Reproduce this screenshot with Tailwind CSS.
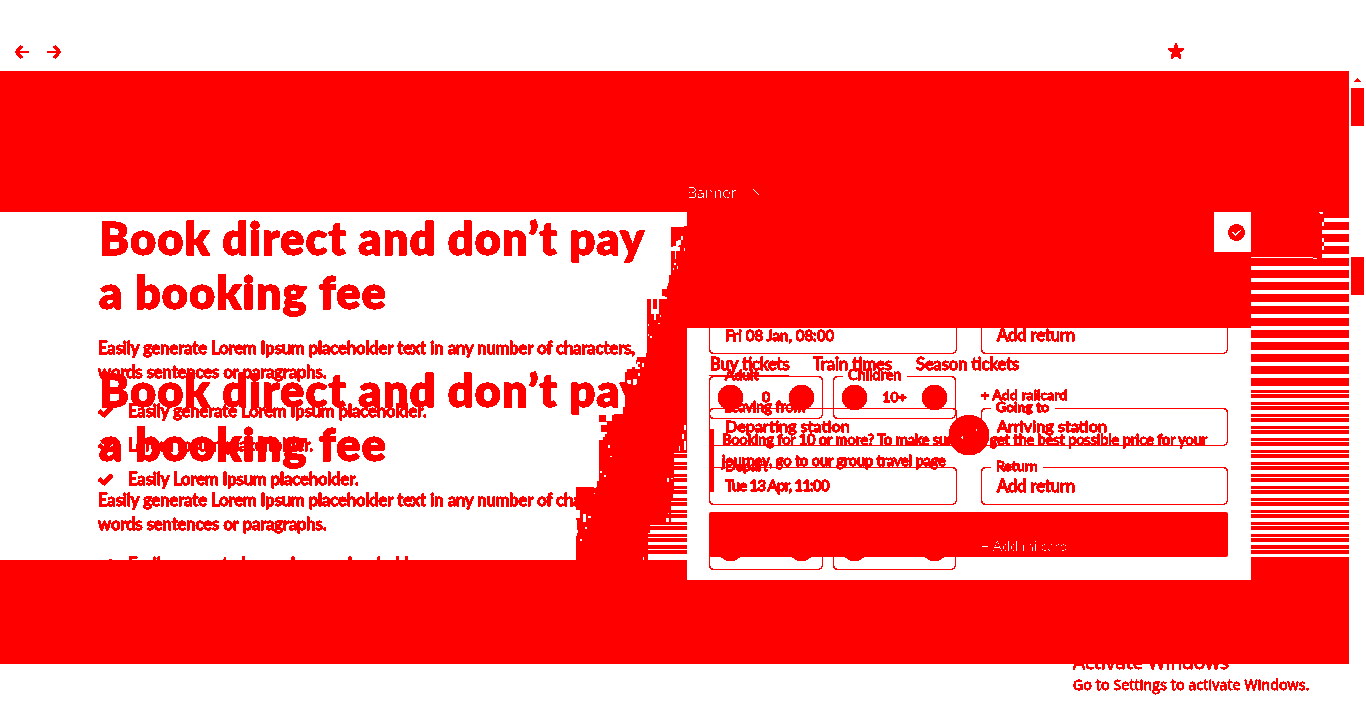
<!DOCTYPE html>
<html lang="en">
<head>
<meta charset="utf-8">
<title>Book direct</title>
<script src="https://cdn.jsdelivr.net/npm/@tailwindcss/browser@4"></script>
</head>
<body class="relative h-[728px] w-[1366px] overflow-hidden bg-white font-['Lato',sans-serif] text-[#ff0000]">
<svg class="absolute size-0">
  <filter id="solid" x="0" y="0" width="1" height="1"><feComponentTransfer><feFuncA type="discrete" tableValues="0 1 1 1 1 1 1 1"/></feComponentTransfer></filter>
  <filter id="core" x="0" y="0" width="1" height="1"><feComponentTransfer><feFuncA type="discrete" tableValues="0 0 0 0 0 0 0 0 0 0 0 0 0 0 1"/></feComponentTransfer></filter>
  <filter id="thin" x="0" y="0" width="1" height="1"><feComponentTransfer><feFuncA type="discrete" tableValues="0 0 0 0 1 1 1"/></feComponentTransfer></filter>
</svg>

<!-- toolbar -->
<header class="flex h-[71px] items-end pb-[12px] pl-[14px]">
  <svg class="h-[14px] w-[15px]" viewBox="0 0 15 14" fill="none" stroke="currentColor" shape-rendering="crispEdges"><path stroke-width="2" d="M15 7H3"/><path stroke-width="3.4" d="M8 1L2.5 7 8 13"/></svg>
  <svg class="ml-[18px] h-[14px] w-[15px]" viewBox="0 0 15 14" fill="none" stroke="currentColor" shape-rendering="crispEdges"><path stroke-width="2" d="M0 7h12"/><path stroke-width="3.4" d="M7 1l5.5 6L7 13"/></svg>
  <svg class="ml-[1106px] h-[16px] w-[16px]" viewBox="0 0 16 16" fill="currentColor" shape-rendering="crispEdges"><path d="M7 0h2l1.2 5.3 5.8.2v1L12.200 9.600 13.500 16h-1.500L8 13.200 4 16H2.500l1.300-6.400L0 6.500v-1l5.800-.2z"/></svg>
</header>
<div class="h-[141px] w-[1349px] bg-[#ff0000]"></div>

<!-- striped backdrop with the ragged picture edge -->
<svg class="absolute left-0 top-0 h-[728px] w-[1366px]" viewBox="0 0 1366 728" fill="#ff0000" shape-rendering="crispEdges">
  <defs>
    <pattern id="wide" x="0" y="222" width="20" height="12" patternUnits="userSpaceOnUse"><rect width="20" height="8"/></pattern>
    <pattern id="narrow" x="0" y="390" width="20" height="12" patternUnits="userSpaceOnUse"><rect width="20" height="3"/><rect y="4" width="20" height="4"/></pattern>
  </defs>
  <rect x="1251" y="212" width="98" height="6"/>
  <rect x="1251" y="218" width="98" height="168" fill="url(#wide)"/>
  <rect x="1251" y="386" width="98" height="156" fill="url(#narrow)"/>
  <path d="M1251 545h98v4h-98zM1251 550h98v4h-98z"/>
  <rect x="640" y="450" width="47" height="92" fill="url(#narrow)"/>
  <path d="M640 545h47v4h-47zM640 550h47v4h-47z"/>
  <path d="M1251 212h68v2h4v4h1v36h-2v4h-4v1h-5v-1h-62z"/>
  <path fill="#fff" d="M1319 212h4v2h-3v-1h-1zM1322 222h2v4h-2zM1322 230h2v4h-2zM1322 238h2v4h-2zM1322 246h2v4h-2zM1251 257h62v1h-62zM1313 258h4v1h-4zM1323 254h26v4h-27v-2h1z"/>
  <path d="M687 226h-3v1h-13v20h2v-1h3v-5h2v-1h2v7h-9v28h-2v6h2v5h-2v3h-7v7h3v1h3v2h-21v54h-1v4h-9v3h-1v4h2v3h-6v2h-5v3h-2v35h-2v7h-9v1h-2v6h-6v-6h-7v7h8v3h-6v7h6v2h-2v3h-2v3h-4v41h-2v7h-3v-1h-18v13h-1v6h1v14h1v16h-1v18h72v-23h1v-10h2v-8h12v-1h5v-17h3v-36h2z"/>
  <path d="M687 226V450h-5v2h-8v28l-1 20h-2v10h-5v12h-16v11h-2v27h-72v-20l24-62h4l15-8 19-70 39-150z"/>
  <path fill="#fff" d="M651 299h2v10h4v-10h2v15h-3v6h-2v-6h-3zM671 247h9v4h-9zM675 251h1v8h-1zM681 236h2v4h-2zM679 240h2v5h-2zM684 248h1v3h-1zM674 263h2v2h-2zM677 266h1v3h-1zM673 268h1v2h-1zM664 297h3v2h-3zM660 315h1v2h-1zM658 323h2v1h-2zM648 324h1v2h-1zM648 334h1v2h-1zM650 336h2v2h-2zM637 362h3v2h-3zM642 363h2v4h-2zM635 367h5v2h-5zM627 380h4v4h-4zM633 379h4v6h-4zM638 373h2v3h-2zM608 445h2v3h-2zM610 456h2v1h-2zM600 471h2v2h-2zM604 475h2v2h-2zM594 493h1v1h-1zM576 510h4v8h-4zM583 514h3v8h-3zM588 516h3v2h-3zM585 527h2v2h-2zM577 530h1v3h-1zM580 539h2v2h-2zM684 425h2v5h-2zM682 434h2v5h-2zM684 441h2v9h-2zM679 446h1v5h-1zM667 478h2v4h-2zM671 478h2v1h-2zM643 557h1v3h-1z"/>
  <path d="M669 507h2v15h-2zM660 513h8v1h-8z"/>
  <path d="M0 560h687v-3h662v107h-1349z"/>
  <path d="M687 212h564v120h-564z"/>
</svg>

<!-- left column, drawn twice where two scroll states overlap -->
<main class="absolute left-[98px] top-0 h-[560px] w-[550px] overflow-hidden [filter:url(#solid)]">
  <section class="absolute left-0 top-[211px] w-[580px] whitespace-nowrap">
    <h1 class="pl-px text-[45px] font-extrabold leading-[54px] tracking-[1.1px] [-webkit-text-stroke:0.4px]">Book direct and don’t pay<br>a booking fee</h1>
    <p class="mt-[17px] text-[16.5px] font-medium leading-[24px] [-webkit-text-stroke:0.7px]">Easily generate Lorem Ipsum placeholder text in any number of characters,<br>words sentences or paragraphs.</p>
    <ul class="mt-[10px] text-[16.5px] font-medium leading-[34px] [-webkit-text-stroke:0.7px]">
      <li class="flex items-center gap-[15px]"><svg class="size-[15px]" viewBox="0 0 15 15" fill="none" stroke="currentColor" stroke-width="3.8"><path d="M1 7l5 4 8-8"/></svg>Easily generate Lorem Ipsum placeholder.</li>
      <li class="flex items-center gap-[15px]"><svg class="size-[15px]" viewBox="0 0 15 15" fill="none" stroke="currentColor" stroke-width="3.8"><path d="M1 7l5 4 8-8"/></svg>Lorem Ipsum placeholder.</li>
      <li class="flex items-center gap-[15px]"><svg class="size-[15px]" viewBox="0 0 15 15" fill="none" stroke="currentColor" stroke-width="3.8"><path d="M1 7l5 4 8-8"/></svg>Easily Lorem Ipsum placeholder.</li>
    </ul>
  </section>
  <section class="absolute left-0 top-[363px] w-[580px] whitespace-nowrap">
    <h2 class="pl-px text-[45px] font-extrabold leading-[54px] tracking-[1.1px] [-webkit-text-stroke:0.4px]">Book direct and don’t pay<br>a booking fee</h2>
    <p class="mt-[17px] text-[16.5px] font-medium leading-[24px] [-webkit-text-stroke:0.7px]">Easily generate Lorem Ipsum placeholder text in any number of characters,<br>words sentences or paragraphs.</p>
    <ul class="mt-[11px] text-[16.5px] font-medium leading-[34px] [-webkit-text-stroke:0.7px]">
      <li class="flex items-center gap-[15px]"><svg class="size-[15px]" viewBox="0 0 15 15" fill="none" stroke="currentColor" stroke-width="3.8"><path d="M1 7l5 4 8-8"/></svg>Easily generate Lorem Ipsum placeholder.</li>
    </ul>
  </section>
</main>

<!-- booking card -->
<section class="absolute left-[687px] top-[328px] h-[252px] w-[564px] overflow-hidden bg-white">
  <div class="absolute inset-0 whitespace-nowrap font-medium [-webkit-text-stroke:0.6px] [filter:url(#solid)]">
    <!-- first scroll state -->
    <div class="absolute left-[22px] top-[-12px] flex h-[38px] gap-[24px] text-[15px] leading-[36px]">
      <div class="w-[248px] rounded-[5px] border border-current pl-[15px]">Fri 08 Jan, 08:00</div>
      <div class="w-[247px] rounded-[5px] border border-current pl-[15px] text-[16.4px] leading-[35px]">Add return</div>
    </div>
    <div class="absolute left-[22px] top-[48px] flex h-[43px] gap-[10px] text-[14px]">
      <div class="flex w-[114px] items-center justify-between rounded-[5px] border border-current px-[8px]"><i class="size-[25px] rounded-full bg-current"></i><span class="mt-[-2px]">0</span><i class="size-[25px] rounded-full bg-current"></i></div>
      <div class="relative flex w-[123px] items-center justify-between rounded-[5px] border border-current px-[8px]"><i class="size-[25px] rounded-full bg-current"></i><span class="mt-[-2px]">10+</span><i class="size-[25px] rounded-full bg-current"></i></div>
      <span class="ml-[15px] text-[14.2px] leading-[37px]">+ Add railcard</span>
    </div>
    <i class="absolute left-[22px] top-[47px] h-px w-[80px] bg-current"></i>
    <span class="absolute left-[38px] top-[38px] text-[14px] leading-[17px]">Adult</span>
    <!-- second scroll state -->
    <nav class="absolute left-[23px] top-[25px] flex gap-[24px] text-[16.4px] leading-[22px]"><span class="w-[79px]">Buy tickets</span><span class="w-[79px]">Train times</span><span>Season tickets</span></nav>
    <div class="absolute left-[22px] top-[80px] flex h-[38px] gap-[24px] text-[16.2px] leading-[34px]">
      <div class="w-[248px] rounded-[5px] border border-current pl-[15px]">Departing station</div>
      <div class="w-[247px] rounded-[5px] border border-current pl-[15px]">Arriving station</div>
    </div>
    <div class="absolute left-[22px] top-[139px] flex h-[38px] gap-[24px] text-[15px] leading-[35px]">
      <div class="w-[248px] rounded-[5px] border border-current pl-[15px] tracking-[-0.8px]">Tue 13 Apr, 11:00</div>
      <div class="w-[247px] rounded-[5px] border border-current pl-[15px] text-[16.4px]">Add return</div>
    </div>
    <span class="absolute left-[37px] top-[70px] text-[14.3px] leading-[17px]">Leaving from</span>
    <span class="absolute left-[38px] top-[129px] text-[14px] leading-[17px]">Depart</span>
  </div>
  <i class="absolute left-[304px] top-[79px] h-[3px] w-[64px] bg-white"></i>
  <i class="absolute left-[304px] top-[138px] h-[3px] w-[52px] bg-white"></i>
  <i class="absolute left-[156px] top-[48px] h-px w-[64px] bg-white"></i>
  <div class="absolute inset-0 whitespace-nowrap font-medium [-webkit-text-stroke:0.6px] [filter:url(#solid)]">
    <span class="absolute left-[161px] top-[38px] text-[14.4px] leading-[17px]">Children</span>
    <span class="absolute left-[309px] top-[70px] text-[14px] leading-[17px]">Going to</span>
    <span class="absolute left-[309px] top-[129px] text-[14px] leading-[17px]">Return</span>
    <p class="absolute left-[22px] top-[101px] h-[63px] border-l-[5px] border-current pl-[8px] text-[14.5px] leading-[21px] tracking-[-0.1px]">Booking for 10 or more? To make sure you get the best possible price for your<br>journey, go to our <u>group travel page</u></p>
    <i class="absolute left-[262px] top-[87px] size-[40px] rounded-full bg-current"></i>
    <div class="absolute left-[22px] top-[199px] flex h-[43px] gap-[10px]">
      <div class="flex w-[114px] items-center justify-between rounded-[5px] border border-current px-[8px]"><i class="size-[25px] rounded-full bg-current"></i><i class="size-[25px] rounded-full bg-current"></i></div>
      <div class="flex w-[123px] items-center justify-between rounded-[5px] border border-current px-[8px]"><i class="size-[25px] rounded-full bg-current"></i><i class="size-[25px] rounded-full bg-current"></i></div>
    </div>
  </div>
  <svg class="absolute left-[262px] top-[87px] size-[40px]" viewBox="0 0 40 40" fill="#fff" shape-rendering="crispEdges"><path d="M27 14h1v2h-1zM13 21h1v1h-1zM12 22h1v1h-1zM13 22h1v2h-1z"/></svg>
  <div class="absolute left-[22px] top-[184px] h-[45px] w-[519px] rounded-[2px] bg-[#ff0000] pl-[272px] pt-[24px] text-[14.3px] leading-[20px] text-white"><span class="[filter:url(#core)]">+ Add railcard</span></div>
</section>

<div class="absolute left-[687px] top-[183px] flex items-center gap-[17px] text-[16px] leading-[17px] text-white"><span class="font-light [filter:url(#thin)]">Banner</span><svg class="h-[6px] w-[6px]" viewBox="0 0 6 6" fill="none" stroke="currentColor" shape-rendering="crispEdges"><path d="M0 0l5 5h1"/></svg></div>
<div class="absolute left-[1214px] top-[212px] flex h-[40px] w-[37px] items-center bg-white pl-[14px]">
  <svg class="size-[17px]" viewBox="0 0 17 17" shape-rendering="crispEdges"><circle cx="8.5" cy="8.5" r="8.5" fill="#ff0000"/><path d="M4.5 8l3 3 5.500-5" fill="none" stroke="#fff" stroke-width="1.2"/></svg>
</div>

<!-- scrollbar -->
<aside class="absolute left-[1351px] top-[78px] flex w-[13px] flex-col items-center">
  <svg class="h-[4px] w-[7px]" viewBox="0 0 7 4" fill="currentColor" shape-rendering="crispEdges"><path d="M3 0h1v1h1v1h1v1h1v1h-7v-1h1v-1h1v-1h1z"/></svg>
  <i class="mt-[6px] h-[38px] w-full bg-current"></i>
  <i class="mt-[131px] h-[38px] w-full bg-current"></i>
</aside>

<footer class="absolute left-[1073px] top-[650px] whitespace-nowrap font-['Open_Sans',sans-serif] [-webkit-text-stroke:0.3px] [filter:url(#solid)]">
  <div class="text-[19px] leading-[25px]">Activate Windows</div>
  <div class="text-[14px] leading-[20px] tracking-[0.2px]">Go to Settings to activate Windows.</div>
</footer>
</body>
</html>
